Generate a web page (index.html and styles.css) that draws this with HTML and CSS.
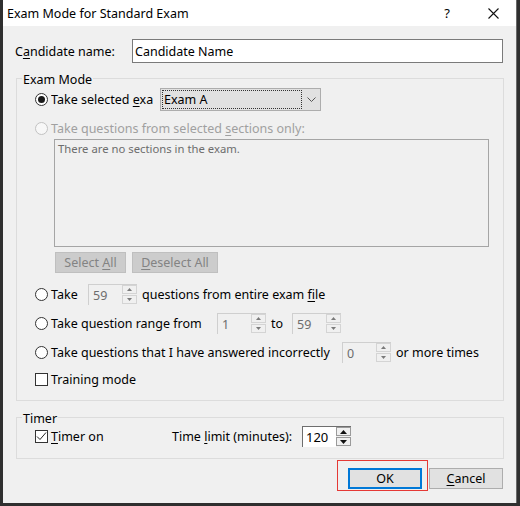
FILE: index.html
```html
<!DOCTYPE html>
<html>
<head>
<meta charset="utf-8">
<link rel="stylesheet" href="styles.css">
</head>
<body>
<div class="window">
  <div class="titlebar">
    <span class="title">Exam Mode for Standard Exam</span>
    <span class="tb-btn help">?</span>
    <span class="tb-btn close"><svg width="11" height="11" viewBox="0 0 11 11"><path d="M0.5 0.5L10.5 10.5M10.5 0.5L0.5 10.5" stroke="#111" stroke-width="1.1" fill="none"/></svg></span>
  </div>
  <div class="content">
    <div class="name-row">
      <span class="name-label">C<u>a</u>ndidate name:</span>
      <div class="textbox">Candidate Name</div>
    </div>

    <div class="group exam-group">
      <div class="group-label">Exam Mode</div>

      <div class="opt row-exam">
        <span class="radio checked"></span>
        <span class="txt w-exa">Take selected <u>e</u>xa</span>
        <div class="combo">
          <div class="combo-focus">Exam A</div>
          <svg class="chev" width="9" height="5" viewBox="0 0 9 5"><path d="M0.5 0.5L4.5 4.5L8.5 0.5" stroke="#555" stroke-width="1" fill="none"/></svg>
        </div>
      </div>

      <div class="opt row-sections disabled">
        <span class="radio"></span>
        <span class="txt">Take questions from selected <u>s</u>ections only:</span>
      </div>

      <div class="listbox">There are no sections in the exam.</div>

      <div class="list-btns">
        <span class="btn-dis w-sel"><span>Select <u>A</u>ll</span></span>
        <span class="btn-dis w-desel"><span><u>D</u>eselect All</span></span>
      </div>

      <div class="opt row-spin first">
        <span class="radio"></span>
        <span class="txt w-take">Take</span>
        <div class="spin">
          <span class="spin-val">59</span>
          <span class="spin-btns">
            <span class="spin-b"><svg width="5" height="3" viewBox="0 0 5 3"><path d="M2.5 0L5 3H0Z" fill="#7a7a7a"/></svg></span>
            <span class="spin-b"><svg width="5" height="3" viewBox="0 0 5 3"><path d="M0 0H5L2.5 3Z" fill="#7a7a7a"/></svg></span>
          </span>
        </div>
        <span class="txt after">questions from entire exam <u>f</u>ile</span>
      </div>

      <div class="opt row-spin">
        <span class="radio"></span>
        <span class="txt w-range">Take question range from</span>
        <div class="spin">
          <span class="spin-val">1</span>
          <span class="spin-btns">
            <span class="spin-b"><svg width="5" height="3" viewBox="0 0 5 3"><path d="M2.5 0L5 3H0Z" fill="#7a7a7a"/></svg></span>
            <span class="spin-b"><svg width="5" height="3" viewBox="0 0 5 3"><path d="M0 0H5L2.5 3Z" fill="#7a7a7a"/></svg></span>
          </span>
        </div>
        <span class="txt after w-to">to</span>
        <div class="spin">
          <span class="spin-val">59</span>
          <span class="spin-btns">
            <span class="spin-b"><svg width="5" height="3" viewBox="0 0 5 3"><path d="M2.5 0L5 3H0Z" fill="#7a7a7a"/></svg></span>
            <span class="spin-b"><svg width="5" height="3" viewBox="0 0 5 3"><path d="M0 0H5L2.5 3Z" fill="#7a7a7a"/></svg></span>
          </span>
        </div>
      </div>

      <div class="opt row-spin">
        <span class="radio"></span>
        <span class="txt w-incorrect">Take questions that I have answered incorrectly</span>
        <div class="spin">
          <span class="spin-val">0</span>
          <span class="spin-btns">
            <span class="spin-b"><svg width="5" height="3" viewBox="0 0 5 3"><path d="M2.5 0L5 3H0Z" fill="#7a7a7a"/></svg></span>
            <span class="spin-b"><svg width="5" height="3" viewBox="0 0 5 3"><path d="M0 0H5L2.5 3Z" fill="#7a7a7a"/></svg></span>
          </span>
        </div>
        <span class="txt after">or more times</span>
      </div>

      <div class="opt row-check">
        <span class="check"></span>
        <span class="txt">Training mode</span>
      </div>
    </div>

    <div class="group timer-group">
      <div class="group-label">Timer</div>
      <div class="opt row-timer">
        <span class="check checked"><svg width="11" height="11" viewBox="0 0 11 11"><path d="M1 5.5L4 8.5L10 1.5" stroke="#222" stroke-width="1" fill="none"/></svg></span>
        <span class="txt w-timer"><u>T</u>imer on</span>
        <span class="txt w-limit">Time <u>l</u>imit (minutes):</span>
        <div class="spin active">
          <span class="spin-val">120</span>
          <span class="spin-btns">
            <span class="spin-b"><svg width="7" height="4" viewBox="0 0 7 4"><path d="M3.5 0L7 4H0Z" fill="#111"/></svg></span>
            <span class="spin-b"><svg width="7" height="4" viewBox="0 0 7 4"><path d="M0 0H7L3.5 4Z" fill="#111"/></svg></span>
          </span>
        </div>
      </div>
    </div>

    <div class="dlg-btns">
      <span class="btn ok">OK</span>
      <span class="btn"><span><u>C</u>ancel</span></span>
      <span class="highlight"></span>
    </div>
  </div>
</div>
</body>
</html>
```

FILE: styles.css
```css
html, body {
  margin: 0;
  padding: 0;
}
body {
  width: 520px;
  height: 506px;
  overflow: hidden;
  background: #2f2f2f;
  font-family: "Noto Sans", "Open Sans", sans-serif;
  font-size: 12.5px;
  color: #000;
}
u {
  text-decoration: underline;
  text-underline-offset: 2px;
}
.window {
  margin-left: 3px;
  width: 514px;
  height: 503px;
  background: #f0f0f0;
  box-sizing: border-box;
  border-right: 1px solid #6a6a6a;
}
.titlebar {
  height: 26px;
  background: #fff;
  display: flex;
  align-items: center;
}
.title {
  flex: 1;
  padding-left: 4px;
  font-size: 12.5px;
}
.tb-btn {
  width: 46px;
  height: 26px;
  display: flex;
  align-items: center;
  justify-content: center;
  font-size: 13px;
}
.content {
  padding: 13px 12px 0 12px;
  position: relative;
}
.name-row {
  display: flex;
  align-items: center;
  height: 24px;
}
.name-label {
  width: 117px;
}
.textbox {
  flex: 1;
  height: 24px;
  margin-right: 1px;
  box-sizing: border-box;
  border: 1px solid #7a7a7a;
  background: #fff;
  padding-left: 2px;
  display: flex;
  align-items: center;
}
.group {
  border: 1px solid #dcdcdc;
  margin-left: 1px;
  padding: 0 0 12px 18px;
}
.exam-group {
  margin-top: 15px;
}
.timer-group {
  margin-top: 16px;
  padding-bottom: 11px;
}
.group-label {
  margin: -7px 0 0 -13px;
  padding: 0 1px;
  width: max-content;
  height: 14px;
  line-height: 16px;
  background: #f0f0f0;
}
.opt {
  display: flex;
  align-items: center;
}
.txt {
  white-space: nowrap;
  flex: none;
}
.radio {
  width: 13px;
  height: 13px;
  box-sizing: border-box;
  border: 1px solid #333;
  border-radius: 50%;
  margin-right: 3px;
  background: #fff;
  flex: none;
  display: flex;
  align-items: center;
  justify-content: center;
}
.radio.checked::after {
  content: "";
  width: 7px;
  height: 7px;
  border-radius: 50%;
  background: #1a1a1a;
}
.disabled {
  color: #a0a0a0;
}
.disabled .radio {
  border-color: #c2c2c2;
  background: #f7f7f7;
}
.check {
  width: 13px;
  height: 13px;
  box-sizing: border-box;
  border: 1px solid #333;
  background: #fff;
  margin-right: 3px;
  flex: none;
  display: flex;
  align-items: center;
  justify-content: center;
}
.row-exam {
  margin-top: 1px;
  height: 24px;
}
.w-exa {
  width: 109px;
  overflow: hidden;
}
.combo {
  width: 161px;
  height: 23px;
  box-sizing: border-box;
  border: 1px solid #adadad;
  background: #e1e1e1;
  display: flex;
  align-items: center;
  padding: 1px;
}
.combo-focus {
  width: 140px;
  height: 19px;
  box-sizing: border-box;
  border: 1px dotted #333;
  padding-left: 1px;
  display: flex;
  align-items: center;
}
.chev {
  margin-left: 5px;
}
.row-sections {
  margin-top: 8px;
  height: 18px;
}
.listbox {
  margin: 2px 14px 0 19px;
  height: 108px;
  box-sizing: border-box;
  border: 1px solid #a5a5a5;
  background: #f0f0f0;
  color: #6d6d6d;
  font-size: 11.3px;
  padding: 1px 3px;
}
.list-btns {
  display: flex;
  gap: 6px;
  margin: 5px 0 0 20px;
}
.btn-dis {
  height: 21px;
  box-sizing: border-box;
  border: 1px solid #bfbfbf;
  background: #cccccc;
  color: #838383;
  display: flex;
  align-items: center;
  justify-content: center;
}
.w-sel { width: 71px; }
.w-desel { width: 86px; }
.row-spin {
  height: 21px;
  margin-top: 8px;
}
.row-spin.first {
  margin-top: 11px;
}
.w-take { width: 37px; }
.w-range { width: 166px; }
.w-incorrect { width: 291px; }
.w-to { width: 21px; }
.after { margin-left: 5px; }
.spin {
  width: 49px;
  height: 21px;
  box-sizing: border-box;
  border-top: 1px solid #cfcfcf;
  border-left: 1px solid #cfcfcf;
  display: flex;
  flex: none;
  color: #6d6d6d;
}
.spin-val {
  flex: 1;
  padding-left: 4px;
  display: flex;
  align-items: center;
}
.spin-btns {
  width: 15px;
  display: flex;
  flex-direction: column;
  gap: 1px;
  padding-bottom: 1px;
}
.spin-b {
  flex: 1;
  box-sizing: border-box;
  border: 1px solid #d4d4d4;
  display: flex;
  align-items: center;
  justify-content: center;
}
.row-check {
  margin-top: 8px;
  height: 17px;
}
.row-timer {
  margin-top: 1px;
  height: 21px;
}
.w-timer { width: 121px; }
.w-limit { width: 130px; }
.spin.active {
  background: #fff;
  color: #000;
  border-top-color: #6e6e6e;
  border-left-color: #6e6e6e;
  font-size: 13px;
}
.spin.active .spin-val {
  padding-left: 3px;
}
.spin.active .spin-btns {
  background: #f0f0f0;
}
.spin.active .spin-b {
  border-color: #9a9a9a;
  background: #f0f0f0;
}
.dlg-btns {
  display: flex;
  justify-content: flex-end;
  gap: 7px;
  margin: 9px 1px 0 0;
  position: relative;
}
.btn {
  width: 74px;
  height: 21px;
  box-sizing: border-box;
  border: 1px solid #adadad;
  background: #e1e1e1;
  display: flex;
  align-items: center;
  justify-content: center;
}
.btn.ok {
  border: 2px solid #0078d7;
}
.highlight {
  position: absolute;
  left: 322px;
  top: -8px;
  width: 91px;
  height: 31px;
  box-sizing: border-box;
  border: 1px solid #e53935;
  pointer-events: none;
}
```
